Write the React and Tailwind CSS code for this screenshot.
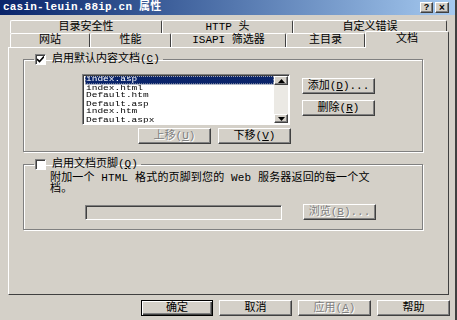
import React from 'react';

const raised = "border border-t-white border-l-white border-r-[#404040] border-b-[#404040] shadow-[inset_-1px_-1px_0_#808080]";
const sunken = "border border-t-[#808080] border-l-[#808080] border-r-white border-b-white shadow-[inset_1px_1px_0_#404040]";
const dimText = "text-[#808080] [text-shadow:1px_1px_0_#fff]";

const Btn = ({ children, className = "", disabled, primary }) => (
  <button
    className={`flex items-center justify-center h-[16px] bg-[#d4d0c8] text-[11px] leading-none ${
      primary
        ? "border border-black shadow-[inset_1px_1px_0_#fff,inset_-1px_-1px_0_#404040,inset_-2px_-2px_0_#808080]"
        : raised
    } ${disabled ? dimText : "text-black"} ${className}`}
  >
    {children}
  </button>
);

const CheckBox = ({ checked }) => (
  <span className={`w-[11px] h-[11px] bg-white flex items-center justify-center ${sunken}`}>
    {checked && (
      <svg width="7" height="7" viewBox="0 0 7 7">
        <path d="M0 3 L2.5 5.5 L7 0.5" stroke="#000" strokeWidth="1.6" fill="none" />
      </svg>
    )}
  </span>
);

const Arrow = ({ up }) => (
  <svg width="7" height="4" viewBox="0 0 7 4">
    <polygon points={up ? "0,4 7,4 3.5,0" : "0,0 7,0 3.5,4"} fill="#000" />
  </svg>
);

const files = ["index.asp", "index.html", "Default.htm", "Default.asp", "index.htm", "Default.aspx"];

const row1 = [
  { label: "目录安全性", w: "w-[152px]" },
  { label: "HTTP 头", w: "w-[131px]" },
  { label: "自定义错误", w: "w-[154px]" },
];

const row2 = [
  { label: "网站", w: "w-[80px]" },
  { label: "性能", w: "w-[81px]" },
  { label: "ISAPI 筛选器", w: "w-[115px]" },
  { label: "主目录", w: "w-[79px]" },
];

const tab = "flex items-center justify-center border-t border-l border-r border-t-white border-l-white border-r-[#404040] rounded-t-[2px] text-[11px] leading-none";

export default function App() {
  return (
    <div className="w-[457px] h-[320px] bg-[#d4d0c8] flex flex-col border-r-2 border-r-[#404040] overflow-hidden font-['Liberation_Mono','Noto_Sans_CJK_SC',monospace] text-black">
      {/* Title bar */}
      <div className="h-[15px] flex items-center justify-between pl-[3px] pr-[6px] bg-gradient-to-r from-[#0a246a] to-[#a6caf0]">
        <span className="text-white font-bold text-[11px] leading-none tracking-[0.2px]">casin-leuin.88ip.cn 属性</span>
        <div className="flex gap-[2px]">
          <span className={`w-[13px] h-[11px] bg-[#d4d0c8] flex items-center justify-center text-[9px] font-bold leading-none font-['Liberation_Sans',sans-serif] ${raised}`}>?</span>
          <span className={`w-[14px] h-[11px] bg-[#d4d0c8] flex items-center justify-center text-[10px] font-bold leading-none font-['Liberation_Sans',sans-serif] ${raised}`}>×</span>
        </div>
      </div>

      {/* Tabs */}
      <div className="mt-[5px] pl-[10px] flex h-[13px]">
        {row1.map((t) => (
          <div key={t.label} className={`${tab} ${t.w} h-[13px]`}>{t.label}</div>
        ))}
      </div>
      <div className="pl-[10px] flex items-start h-[14px]">
        {row2.map((t) => (
          <div key={t.label} className={`${tab} ${t.w} h-[14px]`}>{t.label}</div>
        ))}
        <div className={`${tab} w-[84px] h-[17px] -mt-[2px] relative z-10 bg-[#d4d0c8] pb-[2px]`}>文档</div>
      </div>

      {/* Panel */}
      <div className="ml-[8px] w-[441px] h-[248px] border border-t-white border-l-white border-r-[#404040] border-b-[#404040] flex flex-col">
        <fieldset className="ml-[14px] mt-[5px] w-[400px] h-[99px] border border-[#808080] shadow-[1px_1px_0_#fff,inset_1px_1px_0_#fff]">
          <legend className="ml-[10px] pl-[1px] pr-[3px] flex items-center gap-[6px] text-[11px] leading-[12px]">
            <CheckBox checked />
            <span>启用默认内容文档(<u>C</u>)</span>
          </legend>
          <div className="flex mt-[9px] ml-[58px]">
            <div className="w-[209px] flex flex-col">
              <div className={`w-[208px] h-[51px] bg-white flex p-[1px] pl-[2px] ${sunken}`}>
                <div className="flex-1 overflow-hidden">
                  <div className="origin-top scale-y-[0.76] text-[9.5px] leading-[10.5px]">
                    {files.map((f, i) => (
                      <div
                        key={f}
                        className={`h-[10.5px] pl-[1px] ${i === 0 ? "bg-[#0a246a] text-white outline-1 outline-dotted outline-[#d4d0c8] -outline-offset-1" : ""}`}
                      >
                        {f}
                      </div>
                    ))}
                  </div>
                </div>
                <div className="w-[14px] flex flex-col bg-[#ebe9e4]">
                  <div className={`h-[9px] bg-[#d4d0c8] flex items-center justify-center ${raised}`}><Arrow up /></div>
                  <div className="flex-1" />
                  <div className={`h-[9px] bg-[#d4d0c8] flex items-center justify-center ${raised}`}><Arrow /></div>
                </div>
              </div>
              <div className="flex justify-end gap-[7px] mt-[3px]">
                <Btn className="w-[73px]" disabled>上移(<u>U</u>)</Btn>
                <Btn className="w-[73px]">下移(<u>V</u>)</Btn>
              </div>
            </div>
            <div className="ml-[11px] pt-[4px] flex flex-col gap-[6px]">
              <Btn className="w-[73px]">添加(<u>D</u>)...</Btn>
              <Btn className="w-[73px]">删除(<u>R</u>)</Btn>
            </div>
          </div>
        </fieldset>

        <fieldset className="ml-[14px] mt-[6px] w-[400px] h-[72px] border border-[#808080] shadow-[1px_1px_0_#fff,inset_1px_1px_0_#fff]">
          <legend className="ml-[10px] pl-[1px] pr-[3px] flex items-center gap-[6px] text-[11px] leading-[12px]">
            <CheckBox />
            <span>启用文档页脚(<u>Q</u>)</span>
          </legend>
          <p className="mt-[3px] ml-[26px] text-[11px] leading-[11px] tracking-[0.15px]">
            附加一个 HTML 格式的页脚到您的 Web 服务器返回的每一个文
            <br />
            档。
          </p>
          <div className="flex items-start mt-[9px] ml-[61px]">
            <div className={`w-[197px] h-[15px] bg-[#d4d0c8] mt-[1px] ${sunken}`} />
            <Btn className="w-[73px] ml-[21px]" disabled>浏览(<u>B</u>)...</Btn>
          </div>
        </fieldset>
      </div>

      {/* Bottom buttons */}
      <div className="mt-[5px] pl-[141px] flex gap-[6px]">
        <Btn className="w-[72px]" primary>确定</Btn>
        <Btn className="w-[73px]">取消</Btn>
        <Btn className="w-[73px]" disabled>应用(<u>A</u>)</Btn>
        <Btn className="w-[73px]">帮助</Btn>
      </div>
    </div>
  );
}
